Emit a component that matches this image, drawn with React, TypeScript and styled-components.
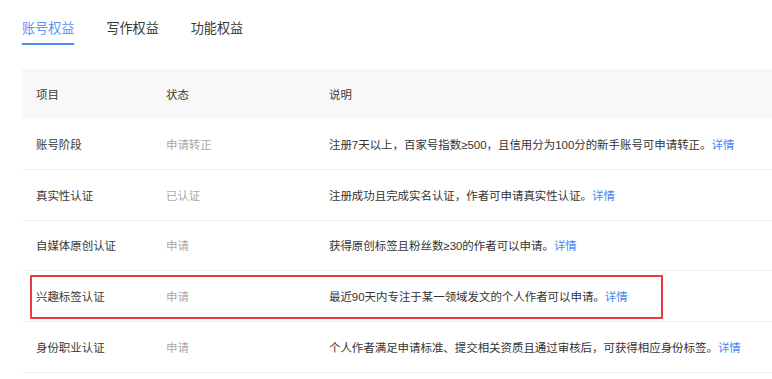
import React from "react";
import styled, { createGlobalStyle } from "styled-components";

const GlobalStyle = createGlobalStyle`
  html, body {
    margin: 0;
    padding: 0;
    background: #ffffff;
  }
  body {
    font-family: "Liberation Sans", "Noto Sans CJK SC", sans-serif;
    color: #333333;
    -webkit-font-smoothing: antialiased;
  }
`;

const Page = styled.div`
  padding-left: 22px;
  overflow: hidden;
`;

const TabBar = styled.div`
  display: flex;
  gap: 32px;
  padding-top: 21px;
`;

const Tab = styled.div<{ $active?: boolean }>`
  font-size: 13.1px;
  line-height: 16px;
  padding-bottom: 6px;
  border-bottom: 2px solid ${(p) => (p.$active ? "#4f8cf6" : "transparent")};
  color: ${(p) => (p.$active ? "#5a95f6" : "#383838")};
  white-space: nowrap;
`;

const Table = styled.div`
  margin-top: 24px;
  width: 800px;
`;

const HeaderRow = styled.div`
  display: grid;
  grid-template-columns: 130px 163px 1fr;
  align-items: center;
  height: 50px;
  padding-left: 14px;
  background: #f8f8f8;
  font-size: 11.44px;
  color: #3a3a3a;
`;

const Row = styled.div`
  position: relative;
  display: grid;
  grid-template-columns: 130px 163px 1fr;
  align-items: center;
  height: 50.8px;
  box-sizing: border-box;
  padding-left: 14px;
  border-bottom: 1px solid #efefef;
  font-size: 11.44px;
`;

const Name = styled.span`
  color: #383838;
  white-space: nowrap;
`;

const Status = styled.span`
  color: #a8a8a8;
  white-space: nowrap;
`;

const Desc = styled.span`
  color: #333333;
  white-space: nowrap;
`;

const Link = styled.a`
  color: #4a86f2;
  text-decoration: none;
  cursor: pointer;
`;

/* Red annotation frame laid over a highlighted row */
const Highlight = styled.div`
  position: absolute;
  left: 8px;
  top: 4px;
  width: 633px;
  height: 44px;
  box-sizing: border-box;
  border: 2px solid #ec3a3f;
  border-radius: 1px;
  pointer-events: none;
`;

type Item = {
  name: string;
  status: string;
  desc: string;
  marked?: boolean;
};

const items: Item[] = [
  {
    name: "账号阶段",
    status: "申请转正",
    desc: "注册7天以上，百家号指数≥500，且信用分为100分的新手账号可申请转正。",
  },
  {
    name: "真实性认证",
    status: "已认证",
    desc: "注册成功且完成实名认证，作者可申请真实性认证。",
  },
  {
    name: "自媒体原创认证",
    status: "申请",
    desc: "获得原创标签且粉丝数≥30的作者可以申请。",
  },
  {
    name: "兴趣标签认证",
    status: "申请",
    desc: "最近90天内专注于某一领域发文的个人作者可以申请。",
    marked: true,
  },
  {
    name: "身份职业认证",
    status: "申请",
    desc: "个人作者满足申请标准、提交相关资质且通过审核后，可获得相应身份标签。",
  },
];

const tabs = ["账号权益", "写作权益", "功能权益"];

export default function App() {
  return (
    <>
      <GlobalStyle />
      <Page>
        <TabBar>
          {tabs.map((t, i) => (
            <Tab key={t} $active={i === 0}>
              {t}
            </Tab>
          ))}
        </TabBar>
        <Table>
          <HeaderRow>
            <span>项目</span>
            <span>状态</span>
            <span>说明</span>
          </HeaderRow>
          {items.map((it) => (
            <Row key={it.name}>
              <Name>{it.name}</Name>
              <Status>{it.status}</Status>
              <Desc>
                {it.desc}
                <Link>详情</Link>
              </Desc>
              {it.marked && <Highlight />}
            </Row>
          ))}
        </Table>
      </Page>
    </>
  );
}
